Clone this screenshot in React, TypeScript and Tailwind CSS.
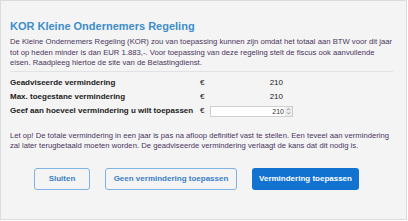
import { ChevronUp, ChevronDown } from 'lucide-react'

const rows = [
  { label: 'Geadviseerde vermindering', value: '210' },
  { label: 'Max. toegestane vermindering', value: '210' },
]

export default function App() {
  return (
    <div className="h-[221px] w-[408px] bg-white font-['Liberation_Sans',Arial,sans-serif]">
      <div className="flex h-[220px] w-[407px] flex-col border border-[#dcdcdc] bg-[#f4f4f4] px-[9px] pt-[18px]">
        <h2 className="text-[11px] font-bold leading-[14px] text-[#3c8dcc]">KOR Kleine Ondernemers Regeling</h2>
        <p className="mt-[4px] whitespace-nowrap text-[7.7px] leading-[10.5px] text-[#4a3560]">
          De Kleine Ondernemers Regeling (KOR) zou van toepassing kunnen zijn omdat het totaal aan BTW voor dit jaar
          <br />
          tot op heden minder is dan EUR 1.883,-. Voor toepassing van deze regeling stelt de fiscus ook aanvullende
          <br />
          eisen. Raadpleeg hiertoe de site van de Belastingdienst.
        </p>
        <div className="mt-[2px] mr-[4px] border-t border-[#e2e2e2]" />
        <div className="mt-[6px] flex flex-col gap-[4px] text-[8px] font-bold text-[#222]">
          {rows.map((row) => (
            <div key={row.label} className="flex h-[10px] items-center">
              <span className="w-[190px]">{row.label}</span>
              <span className="w-[10px] font-normal">€</span>
              <span className="w-[73px] text-right font-normal">{row.value}</span>
            </div>
          ))}
          <div className="flex h-[11px] items-center">
            <span className="w-[190px]">Geef aan hoeveel vermindering u wilt toepassen</span>
            <span className="w-[10px] font-normal">€</span>
            <div className="flex h-[11px] w-[83px] items-stretch border border-[#cfcfcf] bg-white">
              <span className="flex-1 pr-[1px] text-right text-[7px] font-normal leading-[9px] text-[#333]">210</span>
              <span className="flex w-[7px] flex-col items-center justify-center bg-[#ececec] text-[#444]">
                <ChevronUp size={5} strokeWidth={3} />
                <ChevronDown size={5} strokeWidth={3} />
              </span>
            </div>
          </div>
        </div>
        <p className="mt-[14px] whitespace-nowrap text-[7.7px] leading-[10.5px] text-[#4a3560]">
          Let op! De totale vermindering in een jaar is pas na afloop definitief vast te stellen. Een teveel aan vermindering
          <br />
          zal later terugbetaald moeten worden. De geadviseerde vermindering verlaagt de kans dat dit nodig is.
        </p>
        <div className="mt-[16px] flex gap-[15px] pl-[24px] text-[8px] font-bold">
          <button className="h-[22px] w-[56px] rounded-[3px] border border-[#7fb3e6] text-[#3c7fc4]">Sluiten</button>
          <button className="h-[22px] w-[132px] rounded-[3px] border border-[#7fb3e6] text-[#3c7fc4]">
            Geen vermindering toepassen
          </button>
          <button className="h-[22px] w-[107px] rounded-[3px] bg-[#1272cf] text-white">Vermindering toepassen</button>
        </div>
      </div>
    </div>
  )
}
